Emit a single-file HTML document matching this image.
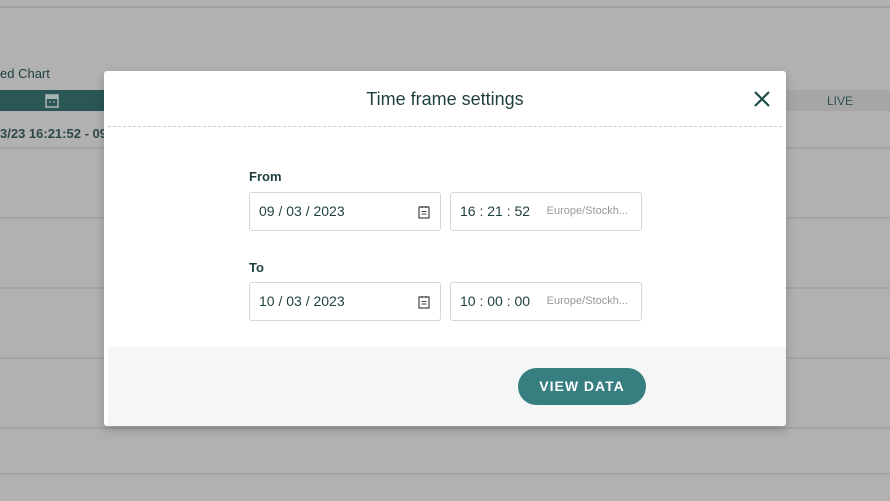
<!DOCTYPE html>
<html><head><style>
body{margin:0;width:890px;height:501px;background:#b1b1b1;position:relative;overflow:hidden;font-family:"Liberation Sans",sans-serif;color:#1f4a4a}
.hl{position:absolute;left:0;width:890px;height:2px;background:#a3a3a3}
.modal{position:absolute;left:104px;top:71px;width:682px;height:355px;background:#fff;border-radius:3px;box-shadow:0 4px 10px rgba(0,0,0,.2);overflow:hidden}
.title{position:absolute;top:18px;width:100%;text-align:center;font-size:18px;color:#1f3f3f}
.sep{position:absolute;left:4px;right:4px;top:55px;border-top:1px dashed #ccc}
.lbl{position:absolute;left:145px;font-size:13px;font-weight:bold;color:#1f3f3f}
.in{position:absolute;height:39px;border:1px solid #d6d6d6;border-radius:3px;box-sizing:border-box;font-size:14px;line-height:37px;padding-left:9px;color:#1f3f3f}
.tz{position:absolute;right:13px;top:0;font-size:11px;color:#999}
.foot{position:absolute;left:4px;right:0;top:276px;bottom:0;background:#f5f7f6}
.btn{position:absolute;left:414px;top:297px;width:128px;height:37px;border-radius:19px;background:#367e7f;color:#fff;font-weight:bold;font-size:14px;letter-spacing:1px;text-align:center;line-height:37px}
</style></head><body>
<div class="hl" style="top:6px"></div>
<div class="hl" style="top:147px"></div>
<div class="hl" style="top:217px"></div>
<div class="hl" style="top:287px"></div>
<div class="hl" style="top:357px"></div>
<div class="hl" style="top:427px"></div>
<div class="hl" style="top:473px"></div>
<div style="position:absolute;left:0;top:66px;font-size:13px;color:#1f4040">ed Chart</div>
<div style="position:absolute;left:0;top:90px;width:104px;height:21px;background:#2b5656"></div>
<svg style="position:absolute;left:45px;top:93px" width="14" height="15" viewBox="0 0 14 15"><rect x="1" y="2" width="12" height="12" fill="none" stroke="#a8b5b5" stroke-width="1.5"/><rect x="1" y="2" width="12" height="4" fill="#a8b5b5"/><path d="M4 9h2M8 9h2" stroke="#a8b5b5"/></svg>
<div style="position:absolute;left:786px;top:90px;width:104px;height:21px;background:#a6a6a6"></div>
<div style="position:absolute;left:827px;top:94px;font-size:12px;color:#2d5050">LIVE</div>
<div style="position:absolute;left:0;top:126px;font-size:13px;font-weight:bold;color:#2d4848">3/23 16:21:52 - 09</div>
<div class="modal">
<div class="title">Time frame settings</div>
<svg style="position:absolute;left:650px;top:20px" width="16" height="16" viewBox="0 0 16 16"><path d="M1 1L15 15M15 1L1 15" stroke="#1f4a4a" stroke-width="2.2"/></svg>
<div class="sep"></div>
<div class="lbl" style="top:98px">From</div>
<div class="in" style="left:145px;top:121px;width:192px">09 / 03 / 2023<svg style="position:absolute;right:10px;top:12px" width="12" height="14" viewBox="0 0 12 14"><rect x="1" y="2" width="10" height="11" fill="none" stroke="#444" stroke-width="1.2"/><path d="M4 1v2M8 1v2M3.5 6.5h5M3.5 9h5" stroke="#444" stroke-width="1.1"/></svg></div>
<div class="in" style="left:346px;top:121px;width:192px">16 : 21 : 52<span class="tz">Europe/Stockh...</span></div>
<div class="lbl" style="top:189px">To</div>
<div class="in" style="left:145px;top:211px;width:192px">10 / 03 / 2023<svg style="position:absolute;right:10px;top:12px" width="12" height="14" viewBox="0 0 12 14"><rect x="1" y="2" width="10" height="11" fill="none" stroke="#444" stroke-width="1.2"/><path d="M4 1v2M8 1v2M3.5 6.5h5M3.5 9h5" stroke="#444" stroke-width="1.1"/></svg></div>
<div class="in" style="left:346px;top:211px;width:192px">10 : 00 : 00<span class="tz">Europe/Stockh...</span></div>
<div class="foot"></div>
<div class="btn">VIEW DATA</div>
</div>
</body></html>
